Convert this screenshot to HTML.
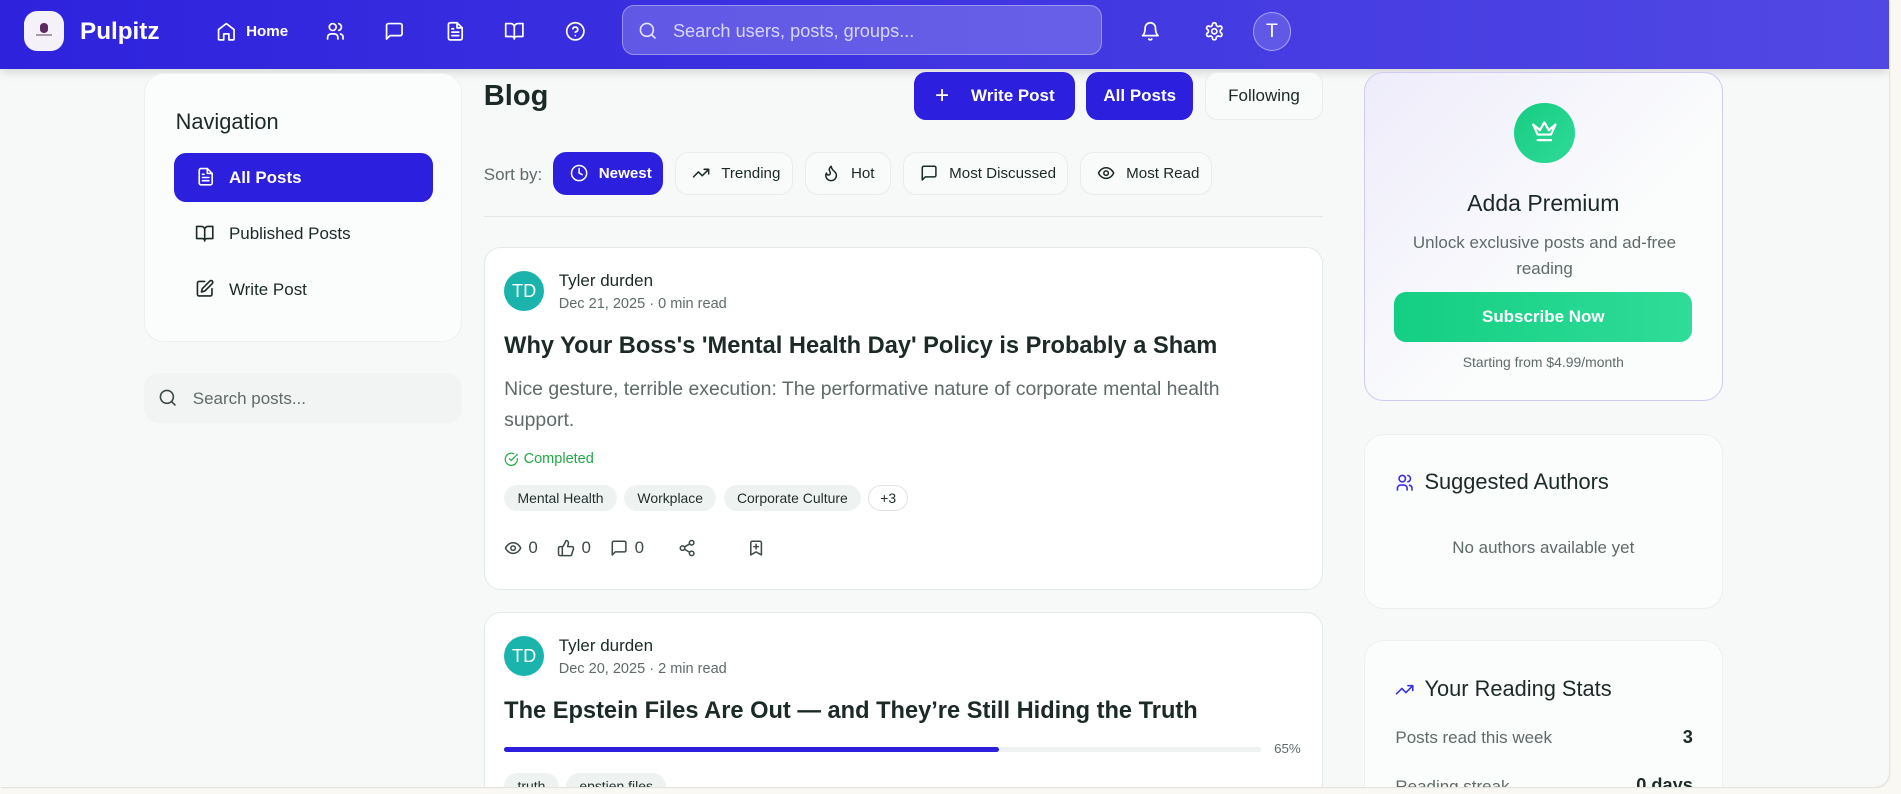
<!DOCTYPE html>
<html><head><meta charset="utf-8">
<style>
*{box-sizing:border-box;margin:0;padding:0}
html,body{width:1901px;height:794px;overflow:hidden;background:#faf8f3}
body{font-family:"Liberation Sans",sans-serif;color:#1b2a27}
#z{zoom:1.2125;width:1567px;height:654px;position:relative;overflow:hidden}
#vp{position:absolute;left:0;top:0;width:1558px;height:649px;background:#f7f9f8;border-bottom-right-radius:12px;overflow:hidden;box-shadow:1px 1px 0 #e6e4de}
.a{position:absolute}
svg{fill:none;stroke:currentColor;stroke-width:2;stroke-linecap:round;stroke-linejoin:round}
#hdr{left:0;top:0;width:1558px;height:57px;background:linear-gradient(90deg,#2e22dd,#5148e4);box-shadow:0 3px 8px rgba(0,0,0,.15)}
.hi{color:#fff;position:absolute;top:17px;width:17px;height:17px}
.card{position:absolute;background:#fbfcfc;border:1px solid #edf0ef;border-radius:16px}
.btn{position:absolute;display:flex;align-items:center;justify-content:center;gap:8px;border-radius:10px;font-size:14px;font-weight:bold}
.sb{position:absolute;top:125px;height:36px;display:flex;align-items:center;gap:9px;padding-left:13px;border:1px solid #e8ecea;border-radius:11px;font-size:12.5px;background:#f9fbfa;color:#1b2a27}
.sb svg{width:15px;height:15px}
.tag{display:inline-block;height:22px;line-height:22px;padding:0 11px;border-radius:11px;background:#eef3f1;font-size:11.5px;margin-right:6px;color:#1f2e2b}
.gray{color:#5f6b69}
</style></head><body><div id="z"><div id="vp">
<div id="hdr" class="a">
  <div class="a" style="left:20px;top:9px;width:33px;height:33px;border-radius:11px;background:#f4f2f8"><div class="a" style="left:13px;top:10px;width:7px;height:8px;background:#5a2c62;border-radius:3px"></div><div class="a" style="left:10px;top:19px;width:13px;height:2px;background:#a898b0"></div></div>
  <div class="a" style="left:66px;top:15px;color:#fff;font-size:20px;font-weight:bold">Pulpitz</div>
  <svg class="hi" style="left:178px" viewBox="0 0 24 24"><path d="M3 10l9-7 9 7v11a1 1 0 0 1-1 1h-5v-7h-6v7H4a1 1 0 0 1-1-1z"/></svg>
  <div class="a" style="left:203px;top:19px;color:#fff;font-size:12.5px;font-weight:bold">Home</div>
  <svg class="hi" style="left:268px" viewBox="0 0 24 24"><circle cx="9" cy="7" r="4"/><path d="M3 21v-2a4 4 0 0 1 4-4h4a4 4 0 0 1 4 4v2M16 3.1a4 4 0 0 1 0 7.8M21 21v-2a4 4 0 0 0-3-3.9"/></svg>
  <svg class="hi" style="left:317px" viewBox="0 0 24 24"><path d="M21 15a2 2 0 0 1-2 2H7l-4 4V5a2 2 0 0 1 2-2h14a2 2 0 0 1 2 2z"/></svg>
  <svg class="hi" style="left:367px" viewBox="0 0 24 24"><path d="M14 2H6a2 2 0 0 0-2 2v16a2 2 0 0 0 2 2h12a2 2 0 0 0 2-2V8z"/><path d="M14 2v6h6M16 13H8M16 17H8M10 9H8"/></svg>
  <svg class="hi" style="left:416px" viewBox="0 0 24 24"><path d="M2 3h6a4 4 0 0 1 4 4v14a3 3 0 0 0-3-3H2zM22 3h-6a4 4 0 0 0-4 4v14a3 3 0 0 1 3-3h7z"/></svg>
  <svg class="hi" style="left:466px" viewBox="0 0 24 24"><circle cx="12" cy="12" r="10"/><path d="M9.1 9a3 3 0 0 1 5.8 1c0 2-3 3-3 3M12 17h.01"/></svg>
  <div class="a" style="left:513px;top:4px;width:396px;height:41px;border-radius:10px;background:rgba(255,255,255,.2);border:1px solid rgba(255,255,255,.35)"></div>
  <svg class="hi" style="left:526px;top:17px;width:16px;height:16px;opacity:.85" viewBox="0 0 24 24"><circle cx="11" cy="11" r="8"/><path d="M21 21l-4.3-4.3"/></svg>
  <div class="a" style="left:555px;top:17px;color:rgba(255,255,255,.75);font-size:15px">Search users, posts, groups...</div>
  <svg class="hi" style="left:940px" viewBox="0 0 24 24"><path d="M6 8a6 6 0 0 1 12 0c0 7 3 9 3 9H3s3-2 3-9M10.3 21a1.9 1.9 0 0 0 3.4 0"/></svg>
  <svg class="hi" style="left:993px" viewBox="0 0 24 24"><path d="M12.2 2h-.4a2 2 0 0 0-2 2v.2a2 2 0 0 1-1 1.7l-.4.3a2 2 0 0 1-2 0l-.2-.1a2 2 0 0 0-2.7.7l-.2.4a2 2 0 0 0 .7 2.7l.2.1a2 2 0 0 1 1 1.7v.5a2 2 0 0 1-1 1.7l-.2.1a2 2 0 0 0-.7 2.7l.2.4a2 2 0 0 0 2.7.7l.2-.1a2 2 0 0 1 2 0l.4.3a2 2 0 0 1 1 1.7v.2a2 2 0 0 0 2 2h.4a2 2 0 0 0 2-2v-.2a2 2 0 0 1 1-1.7l.4-.3a2 2 0 0 1 2 0l.2.1a2 2 0 0 0 2.7-.7l.2-.4a2 2 0 0 0-.7-2.7l-.2-.1a2 2 0 0 1-1-1.7v-.5a2 2 0 0 1 1-1.7l.2-.1a2 2 0 0 0 .7-2.7l-.2-.4a2 2 0 0 0-2.7-.7l-.2.1a2 2 0 0 1-2 0l-.4-.3a2 2 0 0 1-1-1.7V4a2 2 0 0 0-2-2z"/><circle cx="12" cy="12" r="3"/></svg>
  <div class="a" style="left:1033px;top:10px;width:32px;height:32px;border-radius:50%;background:rgba(255,255,255,.15);border:1px solid rgba(255,255,255,.45);color:#fff;font-size:16px;text-align:center;line-height:30px">T</div>
</div>

<div class="card" style="left:119px;top:60px;width:262px;height:222px">
  <div class="a" style="left:25px;top:29px;font-size:18px">Navigation</div>
  <div class="a" style="left:24px;top:65px;width:213px;height:41px;border-radius:10px;background:#2c1fdd"></div>
  <svg class="a" style="left:42px;top:77px;width:16px;height:16px;color:#fff" viewBox="0 0 24 24"><path d="M14 2H6a2 2 0 0 0-2 2v16a2 2 0 0 0 2 2h12a2 2 0 0 0 2-2V8z"/><path d="M14 2v6h6M16 13H8M16 17H8M10 9H8"/></svg>
  <div class="a" style="left:69px;top:78px;font-size:14px;font-weight:bold;color:#fff">All Posts</div>
  <svg class="a" style="left:41px;top:124px;width:16px;height:16px" viewBox="0 0 24 24"><path d="M2 3h6a4 4 0 0 1 4 4v14a3 3 0 0 0-3-3H2zM22 3h-6a4 4 0 0 0-4 4v14a3 3 0 0 1 3-3h7z"/></svg>
  <div class="a" style="left:69px;top:124px;font-size:14px">Published Posts</div>
  <svg class="a" style="left:41px;top:169px;width:16px;height:16px" viewBox="0 0 24 24"><path d="M12 3H5a2 2 0 0 0-2 2v14a2 2 0 0 0 2 2h14a2 2 0 0 0 2-2v-7"/><path d="M18.4 2.6a2.1 2.1 0 0 1 3 3L12 15l-4 1 1-4z"/></svg>
  <div class="a" style="left:69px;top:170px;font-size:14px">Write Post</div>
</div>
<div class="a" style="left:119px;top:308px;width:262px;height:41px;border-radius:12px;background:#f1f4f3"></div>
<svg class="a" style="left:130px;top:320px;width:16px;height:16px;color:#3c4a47" viewBox="0 0 24 24"><circle cx="11" cy="11" r="8"/><path d="M21 21l-4.3-4.3"/></svg>
<div class="a gray" style="left:159px;top:321px;font-size:14px">Search posts...</div>

<div class="a" style="left:399px;top:66px;font-size:24px;font-weight:bold">Blog</div>
<div class="btn" style="left:754px;top:59px;width:133px;height:40px;background:#2c1fdd;color:#fff"><span style="font-size:20px;font-weight:normal;margin-right:10px">+</span>Write Post</div>
<div class="btn" style="left:896px;top:59px;width:88px;height:40px;background:#2c1fdd;color:#fff">All Posts</div>
<div class="btn" style="left:994px;top:59px;width:97px;height:40px;background:#f9fbfa;border:1px solid #e8ecea;font-weight:normal;color:#1b2a27">Following</div>

<div class="a gray" style="left:399px;top:136px;font-size:14px">Sort by:</div>
<div class="sb" style="left:456px;width:91px;background:#2c1fdd;border-color:#2c1fdd;color:#fff;font-weight:bold"><svg viewBox="0 0 24 24"><circle cx="12" cy="12" r="10"/><path d="M12 6v6l4 2"/></svg>Newest</div>
<div class="sb" style="left:557px;width:97px"><svg viewBox="0 0 24 24"><path d="M22 7l-8.5 8.5-5-5L2 17M16 7h6v6"/></svg>Trending</div>
<div class="sb" style="left:664px;width:71px"><svg viewBox="0 0 24 24"><path d="M8.5 14.5A2.5 2.5 0 0 0 11 12c0-1.4-.5-2-1-3-1.1-2.1-.2-4 2-6 .5 2.5 2 4.9 4 6.5 2 1.6 3 3.5 3 5.5a7 7 0 1 1-14 0c0-1.2.4-2.3 1-3a2.5 2.5 0 0 0 2.5 2.5z"/></svg>Hot</div>
<div class="sb" style="left:745px;width:136px"><svg viewBox="0 0 24 24"><path d="M21 15a2 2 0 0 1-2 2H7l-4 4V5a2 2 0 0 1 2-2h14a2 2 0 0 1 2 2z"/></svg>Most Discussed</div>
<div class="sb" style="left:891px;width:109px"><svg viewBox="0 0 24 24"><path d="M2 12s3-7 10-7 10 7 10 7-3 7-10 7-10-7-10-7z"/><circle cx="12" cy="12" r="3"/></svg>Most Read</div>
<div class="a" style="left:399px;top:178px;width:692px;height:1px;background:#e2e8e6"></div>

<div class="card" style="left:399px;top:204px;width:692px;height:283px;background:#fff;border-color:#e4e9e7;border-radius:14px">
  <div class="a" style="left:16px;top:19px;width:33px;height:33px;border-radius:50%;background:#1ab4ac;color:#fff;font-size:15px;text-align:center;line-height:33px">TD</div>
  <div class="a" style="left:61px;top:19px;font-size:14px">Tyler durden</div>
  <div class="a gray" style="left:61px;top:39px;font-size:12px">Dec 21, 2025 · 0 min read</div>
  <div class="a" style="left:16px;top:70px;font-size:19.5px;font-weight:bold">Why Your Boss's 'Mental Health Day' Policy is Probably a Sham</div>
  <div class="a gray" style="left:16px;top:104px;width:615px;font-size:16px;line-height:25px">Nice gesture, terrible execution: The performative nature of corporate mental health support.</div>
  <svg class="a" style="left:16px;top:168px;width:12px;height:12px;color:#22a845" viewBox="0 0 24 24"><path d="M22 11.1V12a10 10 0 1 1-5.9-9.1"/><path d="M22 4L12 14l-3-3"/></svg>
  <div class="a" style="left:32px;top:167px;font-size:12px;color:#22a845">Completed</div>
  <div class="a" style="left:16px;top:195px"><span class="tag">Mental Health</span><span class="tag">Workplace</span><span class="tag">Corporate Culture</span><span class="tag" style="background:#fff;border:1px solid #dfe5e3;line-height:20px;padding:0 9px">+3</span></div>
  <div class="a gray" style="left:16px;top:239px;font-size:14px;display:flex;align-items:center;color:#3d4a47">
    <svg style="width:15px;height:15px" viewBox="0 0 24 24"><path d="M2 12s3-7 10-7 10 7 10 7-3 7-10 7-10-7-10-7z"/><circle cx="12" cy="12" r="3"/></svg><span style="margin:0 16px 0 5px">0</span>
    <svg style="width:15px;height:15px" viewBox="0 0 24 24"><path d="M7 10v12M15 5.9L14 10h5.8a2 2 0 0 1 1.9 2.6l-2.3 8A2 2 0 0 1 17.5 22H4a2 2 0 0 1-2-2v-8a2 2 0 0 1 2-2h2.8a2 2 0 0 0 1.8-1.1L12 2a3.1 3.1 0 0 1 3 3.9z"/></svg><span style="margin:0 16px 0 5px">0</span>
    <svg style="width:15px;height:15px" viewBox="0 0 24 24"><path d="M21 15a2 2 0 0 1-2 2H7l-4 4V5a2 2 0 0 1 2-2h14a2 2 0 0 1 2 2z"/></svg><span style="margin:0 28px 0 5px">0</span>
    <svg style="width:15px;height:15px" viewBox="0 0 24 24"><circle cx="18" cy="5" r="3"/><circle cx="6" cy="12" r="3"/><circle cx="18" cy="19" r="3"/><path d="M8.6 13.5l6.8 4M15.4 6.5l-6.8 4"/></svg>
    <svg style="width:15px;height:15px;margin-left:42px" viewBox="0 0 24 24"><path d="M19 21l-7-4-7 4V5a2 2 0 0 1 2-2h10a2 2 0 0 1 2 2zM12 7v6M9 10h6"/></svg>
  </div>
</div>

<div class="card" style="left:399px;top:505px;width:692px;height:200px;background:#fff;border-color:#e4e9e7;border-radius:14px">
  <div class="a" style="left:16px;top:19px;width:33px;height:33px;border-radius:50%;background:#1ab4ac;color:#fff;font-size:15px;text-align:center;line-height:33px">TD</div>
  <div class="a" style="left:61px;top:19px;font-size:14px">Tyler durden</div>
  <div class="a gray" style="left:61px;top:39px;font-size:12px">Dec 20, 2025 · 2 min read</div>
  <div class="a" style="left:16px;top:70px;font-size:19.5px;font-weight:bold">The Epstein Files Are Out — and They’re Still Hiding the Truth</div>
  <div class="a" style="left:16px;top:110px;width:624px;height:4px;border-radius:2px;background:#eef2f1"><div style="width:408px;height:4px;border-radius:2px;background:#2c1fdd"></div></div>
  <div class="a gray" style="left:651px;top:105px;font-size:11px">65%</div>
  <div class="a" style="left:16px;top:132px"><span class="tag">truth</span><span class="tag">epstien files</span></div>
</div>

<div class="card" style="left:1125px;top:59px;width:296px;height:272px;background:linear-gradient(135deg,#eeecfb,#fbfcfc 60%);border-color:#cfcbf3">
  <div class="a" style="left:123px;top:25px;width:50px;height:50px;border-radius:50%;background:linear-gradient(135deg,#17cc82,#2edb98)"></div>
  <svg class="a" style="left:137px;top:38px;width:22px;height:22px;color:#fff" viewBox="0 0 24 24"><path d="M2 5l4 9h12l4-9-6 5-4-7-4 7zM6 19h12"/></svg>
  <div class="a" style="left:0;width:294px;top:97px;text-align:center;font-size:19px">Adda Premium</div>
  <div class="a gray" style="left:30px;width:236px;top:130px;text-align:center;font-size:14px;line-height:21px">Unlock exclusive posts and ad-free reading</div>
  <div class="btn" style="left:24px;top:181px;width:246px;height:41px;background:linear-gradient(90deg,#14cf83,#2fdc98);color:#fff">Subscribe Now</div>
  <div class="a gray" style="left:0;width:294px;top:232px;text-align:center;font-size:11.5px">Starting from $4.99/month</div>
</div>

<div class="card" style="left:1125px;top:358px;width:296px;height:144px">
  <svg class="a" style="left:25px;top:31px;width:16px;height:16px;color:#3a2fe0" viewBox="0 0 24 24"><circle cx="9" cy="7" r="4"/><path d="M3 21v-2a4 4 0 0 1 4-4h4a4 4 0 0 1 4 4v2M16 3.1a4 4 0 0 1 0 7.8M21 21v-2a4 4 0 0 0-3-3.9"/></svg>
  <div class="a" style="left:49px;top:28px;font-size:18px">Suggested Authors</div>
  <div class="a gray" style="left:0;width:294px;top:85px;text-align:center;font-size:14px">No authors available yet</div>
</div>

<div class="card" style="left:1125px;top:528px;width:296px;height:160px">
  <svg class="a" style="left:25px;top:32px;width:16px;height:16px;color:#3a2fe0" viewBox="0 0 24 24"><path d="M22 7l-8.5 8.5-5-5L2 17M16 7h6v6"/></svg>
  <div class="a" style="left:49px;top:29px;font-size:18px">Your Reading Stats</div>
  <div class="a gray" style="left:25px;top:72px;font-size:14px">Posts read this week</div>
  <div class="a" style="right:24px;top:71px;font-size:15px;font-weight:bold">3</div>
  <div class="a gray" style="left:25px;top:112px;font-size:14px">Reading streak</div>
  <div class="a" style="right:24px;top:110px;font-size:15px;font-weight:bold">0 days</div>
</div>
</div></div></body></html>
